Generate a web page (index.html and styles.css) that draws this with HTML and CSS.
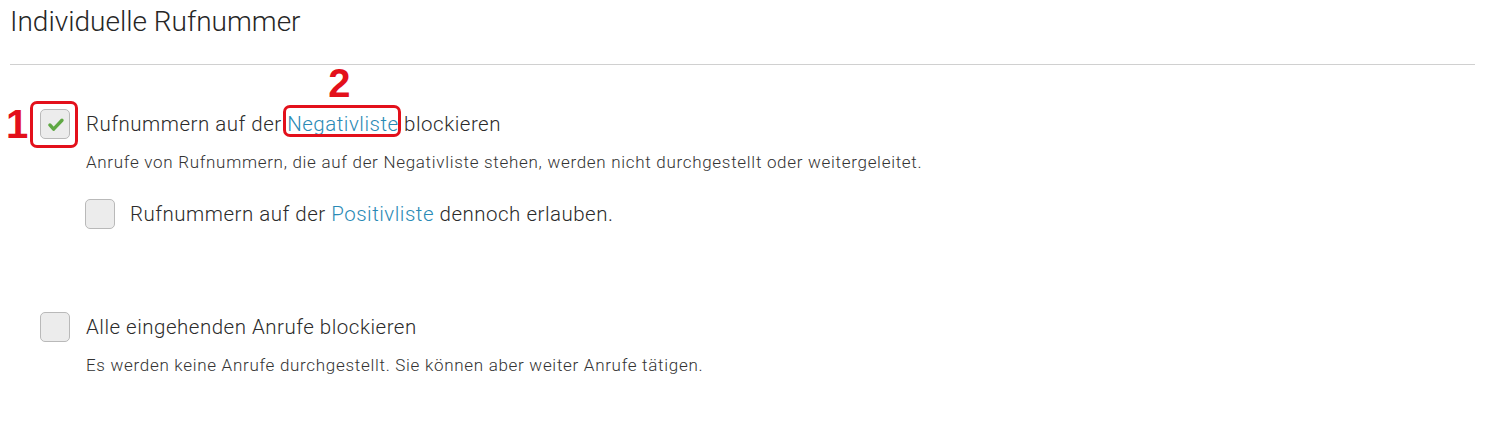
FILE: index.html
```html
<!DOCTYPE html>
<html lang="de">
<head>
<meta charset="utf-8">
<title>Individuelle Rufnummer</title>
<link rel="stylesheet" href="styles.css">
</head>
<body>
<main class="page">
  <h1 class="title">Individuelle Rufnummer</h1>
  <hr class="rule">

  <section class="option option-first">
    <div class="row">
      <span class="marker marker-1">1</span>
      <span class="box-ring">
        <span class="checkbox checked">
          <svg viewBox="0 0 30 30" width="30" height="30" aria-hidden="true">
            <path d="M9.5 16 L13.5 20.5 L22.5 11" fill="none" stroke="#5fa843" stroke-width="3.6" stroke-linecap="round" stroke-linejoin="round"/>
          </svg>
        </span>
      </span>
      <span class="label">Rufnummern auf der <span class="link-ring"><span class="marker marker-2">2</span><a class="link">Negativliste</a></span> blockieren</span>
    </div>
    <p class="desc">Anrufe von Rufnummern, die auf der Negativliste stehen, werden nicht durchgestellt oder weitergeleitet.</p>
    <div class="row sub">
      <span class="checkbox"></span>
      <span class="label">Rufnummern auf der <a class="link">Positivliste</a> dennoch erlauben.</span>
    </div>
  </section>

  <section class="option option-second">
    <div class="row">
      <span class="checkbox"></span>
      <span class="label">Alle eingehenden Anrufe blockieren</span>
    </div>
    <p class="desc">Es werden keine Anrufe durchgestellt. Sie können aber weiter Anrufe tätigen.</p>
  </section>
</main>
</body>
</html>
```

FILE: styles.css
```css
* { box-sizing: border-box; }
html, body { margin: 0; padding: 0; background: #fff; }
body {
  font-family: Roboto, "Liberation Sans", sans-serif;
  font-weight: 300;
  color: #2b2b2b;
}
.page { padding: 0 10px; }
.title {
  margin: 0;
  padding-top: 4px;
  font-size: 28px;
  line-height: 36px;
  font-weight: 300;
  color: #262626;
}
.rule {
  margin: 24px 0 0 0;
  border: 0;
  border-top: 1px solid #d0d0d0;
  height: 0;
}
.option-first { margin-top: 44px; }
.option-second { margin-top: 83px; }
.row {
  display: flex;
  align-items: center;
  position: relative;
}
.option .row:first-child { padding-left: 30px; }
.label {
  font-size: 20.5px;
  letter-spacing: 0.5px;
  line-height: 30px;
  margin-left: 16px;
  position: relative;
}
.checkbox {
  width: 30px;
  height: 30px;
  border: 1px solid #b9b9b9;
  border-radius: 5px;
  background: #ececec;
  display: inline-flex;
  align-items: center;
  justify-content: center;
  flex: none;
}
.checkbox svg { display: block; }
.box-ring { position: relative; display: inline-flex; }
.box-ring::before {
  content: "";
  position: absolute;
  left: -10px; top: -8px; right: -8px; bottom: -9px;
  border: 3px solid #e3101b;
  border-radius: 7px;
}
.marker {
  position: absolute;
  color: #e3101b;
  font-family: "Liberation Sans", Arial, sans-serif;
  font-weight: 700;
  font-size: 40px;
  line-height: 40px;
  letter-spacing: 0;
}
.marker-1 { left: -4px; top: -5px; }
.link-ring { position: relative; }
.link-ring::before {
  content: "";
  position: absolute;
  left: -4px; right: -2px; top: -7px; bottom: -1px;
  border: 3px solid #e3101b;
  border-radius: 7px;
}
.marker-2 { left: 41px; top: -49px; }
.link { color: #2a8ab5; text-decoration: none; }
.desc {
  margin: 12px 0 0 76px;
  font-size: 17px;
  letter-spacing: 0.7px;
  line-height: 22px;
  color: #333;
}
.row.sub { margin-top: 26px; padding-left: 75px; }
.row.sub .label { margin-left: 15px; }
```
